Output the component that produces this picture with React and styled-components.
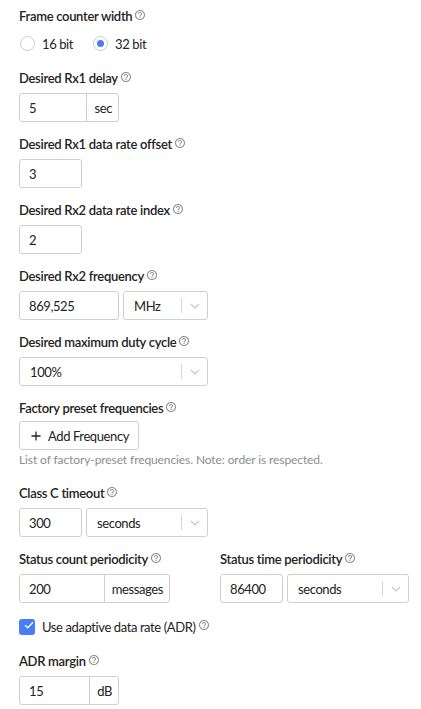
import React from "react";
import styled, { createGlobalStyle } from "styled-components";

const GlobalStyle = createGlobalStyle`
  body {
    margin: 0;
    background: #ffffff;
    color: #222222;
    font-family: Lato, "Liberation Sans", sans-serif;
  }
`;

const HelpIcon = () => (
  <HelpSvg viewBox="0 0 24 24" aria-hidden="true">
    <path d="M11 18h2v-2h-2v2zm1-16C6.48 2 2 6.48 2 12s4.48 10 10 10 10-4.48 10-10S17.52 2 12 2zm0 18c-4.41 0-8-3.59-8-8s3.59-8 8-8 8 3.59 8 8-3.59 8-8 8zm0-14c-2.21 0-4 1.79-4 4h2c0-1.1.9-2 2-2s2 .9 2 2c0 2-3 1.75-3 5h2c0-2.25 3-2.5 3-5 0-2.21-1.79-4-4-4z" />
  </HelpSvg>
);

const Chevron = () => (
  <svg width="10" height="6" viewBox="0 0 10 6" aria-hidden="true">
    <polyline points="0.8,0.8 5,5 9.2,0.8" fill="none" stroke="#c2c2c2" strokeWidth="1.1" />
  </svg>
);

const PlusIcon = () => (
  <svg width="10" height="10" viewBox="0 0 10 10" aria-hidden="true">
    <path d="M5 0.5v9M0.5 5h9" stroke="#222" strokeWidth="1.3" />
  </svg>
);

const CheckMark = () => (
  <svg width="10" height="8" viewBox="0 0 10 8" aria-hidden="true">
    <polyline points="1,4.2 3.8,6.8 9,1.2" fill="none" stroke="#ffffff" strokeWidth="1.3" />
  </svg>
);

const Label = ({ children }) => (
  <LabelText>
    {children}
    <HelpIcon />
  </LabelText>
);

const Select = ({ value, width }) => (
  <SelectBox $width={width}>
    <SelectValue>{value}</SelectValue>
    <Separator />
    <ChevronWrap>
      <Chevron />
    </ChevronWrap>
  </SelectBox>
);

const AddonInput = ({ value, addon, width }) => (
  <Group $width={width}>
    <GroupValue>{value}</GroupValue>
    <Addon>{addon}</Addon>
  </Group>
);

export default function App() {
  return (
    <>
      <GlobalStyle />
      <Form>
        <Field>
          <Label>Frame counter width</Label>
          <RadioRow>
            <RadioOption>
              <Radio />
              16 bit
            </RadioOption>
            <RadioOption>
              <Radio $checked />
              32 bit
            </RadioOption>
          </RadioRow>
        </Field>

        <Field>
          <Label>Desired Rx1 delay</Label>
          <AddonInput value="5" addon="sec" width={100} />
        </Field>

        <Field>
          <Label>Desired Rx1 data rate offset</Label>
          <Input $width={63}>3</Input>
        </Field>

        <Field>
          <Label>Desired Rx2 data rate index</Label>
          <Input $width={63}>2</Input>
        </Field>

        <Field>
          <Label>Desired Rx2 frequency</Label>
          <Row>
            <Input $width={100}>869,525</Input>
            <Select value="MHz" width={85} />
          </Row>
        </Field>

        <Field>
          <Label>Desired maximum duty cycle</Label>
          <Select value="100%" width={189} />
        </Field>

        <Field>
          <Label>Factory preset frequencies</Label>
          <Button>
            <PlusIcon />
            Add Frequency
          </Button>
          <Helper>List of factory-preset frequencies. Note: order is respected.</Helper>
        </Field>

        <Field>
          <Label>Class C timeout</Label>
          <Row>
            <Input $width={63}>300</Input>
            <Select value="seconds" width={122} />
          </Row>
        </Field>

        <Columns>
          <Field>
            <Label>Status count periodicity</Label>
            <AddonInput value="200" addon="messages" width={151} />
          </Field>
          <Field>
            <Label>Status time periodicity</Label>
            <Row>
              <Input $width={63}>86400</Input>
              <Select value="seconds" width={122} />
            </Row>
          </Field>
        </Columns>

        <CheckRow>
          <CheckBox>
            <CheckMark />
          </CheckBox>
          Use adaptive data rate (ADR)
          <HelpIcon />
        </CheckRow>

        <Field>
          <Label>ADR margin</Label>
          <AddonInput value="15" addon="dB" width={100} />
        </Field>
      </Form>
    </>
  );
}

const Form = styled.div`
  width: 390px;
  padding: 6px 12px 0 19px;
  font-size: 13px;
  letter-spacing: -0.4px;
`;

const Field = styled.div`
  margin-bottom: 12px;
`;

const LabelText = styled.div`
  display: flex;
  align-items: center;
  height: 20px;
  margin-bottom: 5px;
  font-size: 13px;
  font-weight: 600;
  line-height: 20px;
  letter-spacing: -0.3px;
  color: #222222;
  white-space: nowrap;
`;

const HelpSvg = styled.svg`
  width: 12px;
  height: 12px;
  margin-left: 2px;
  margin-top: -3px;
  fill: #8c8c8c;
  flex: none;
`;

const RadioRow = styled.div`
  display: flex;
  align-items: center;
  height: 25px;
`;

const RadioOption = styled.label`
  display: flex;
  align-items: center;
  gap: 7px;
  margin-right: 19px;
  color: #222222;
`;

const Radio = styled.span`
  box-sizing: border-box;
  width: 15px;
  height: 15px;
  margin-left: 1px;
  border: 1px solid #cccccc;
  border-radius: 50%;
  display: flex;
  align-items: center;
  justify-content: center;

  &::after {
    content: "";
    width: 7px;
    height: 7px;
    border-radius: 50%;
    background: ${(p) => (p.$checked ? "#4a7cf6" : "transparent")};
  }
`;

const Input = styled.div`
  box-sizing: border-box;
  width: ${(p) => p.$width}px;
  height: 29px;
  padding: 0 9px;
  display: flex;
  align-items: center;
  border: 1px solid #cfcfcf;
  border-radius: 3px;
  color: #222222;
`;

const Group = styled.div`
  box-sizing: border-box;
  width: ${(p) => p.$width}px;
  height: 29px;
  display: flex;
  border: 1px solid #cfcfcf;
  border-radius: 3px;
  color: #222222;
`;

const GroupValue = styled.div`
  flex: 1;
  display: flex;
  align-items: center;
  padding: 0 9px;
`;

const Addon = styled.div`
  display: flex;
  align-items: center;
  padding: 0 6px 0 7px;
  border-left: 1px solid #cfcfcf;
`;

const Row = styled.div`
  display: flex;
  gap: 4px;
`;

const SelectBox = styled.div`
  box-sizing: border-box;
  width: ${(p) => p.$width}px;
  height: 29px;
  display: flex;
  align-items: center;
  border: 1px solid #cfcfcf;
  border-radius: 3px;
  color: #222222;
`;

const SelectValue = styled.div`
  flex: 1;
  padding-left: 10px;
`;

const Separator = styled.span`
  width: 1px;
  height: 15px;
  background: #d6d6d6;
`;

const ChevronWrap = styled.span`
  width: 25px;
  display: flex;
  justify-content: center;
  align-items: center;
`;

const Button = styled.div`
  box-sizing: border-box;
  display: inline-flex;
  align-items: center;
  gap: 7px;
  height: 29px;
  margin-top: -2px;
  padding: 0 9px 0 11px;
  border: 1px solid #cfcfcf;
  border-radius: 3px;
  background: #ffffff;
  color: #222222;
`;

const Helper = styled.div`
  margin-top: 1px;
  padding-bottom: 2px;
  font-size: 12px;
  line-height: 18px;
  letter-spacing: -0.1px;
  color: #8c8c8c;
`;

const Columns = styled.div`
  display: grid;
  grid-template-columns: 189px 189px;
  column-gap: 12px;
  margin-top: 1px;
`;

const CheckRow = styled.div`
  display: flex;
  align-items: center;
  height: 20px;
  margin: 2px 0 14px;
  color: #222222;

  svg:last-child {
    margin-left: 3px;
    margin-top: -5px;
  }
`;

const CheckBox = styled.span`
  box-sizing: border-box;
  width: 16px;
  height: 16px;
  margin-right: 7px;
  border-radius: 3px;
  background: #4a7cf6;
  display: flex;
  align-items: center;
  justify-content: center;
`;
